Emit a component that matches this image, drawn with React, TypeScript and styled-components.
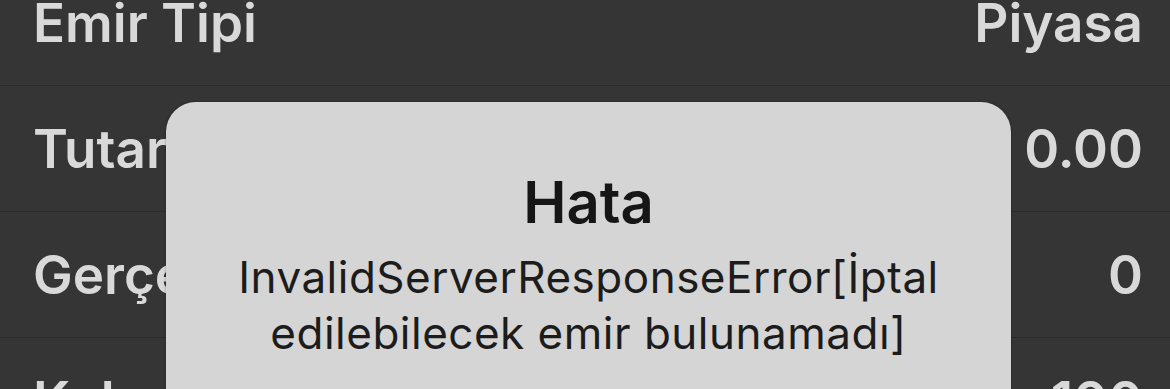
import React from "react";
import styled, { createGlobalStyle } from "styled-components";

const GlobalStyle = createGlobalStyle`
  html, body {
    margin: 0;
    padding: 0;
    width: 1170px;
    height: 389px;
    overflow: hidden;
    background: #353535;
    font-family: Inter, "Noto Sans", "Liberation Sans", sans-serif;
  }
`;

const Screen = styled.div`
  position: relative;
  width: 1170px;
  height: 389px;
  overflow: hidden;
  background: #353535;
`;

const List = styled.div`
  display: flex;
  flex-direction: column;
  margin-top: -40px;
`;

const Row = styled.div`
  display: flex;
  align-items: center;
  justify-content: space-between;
  height: 125px;
  padding: 0 27px 0 33px;
  border-bottom: 1px solid #2b2b2b;
`;

const Label = styled.span`
  font-size: 53px;
  line-height: 62px;
  font-weight: 600;
  color: #d9d9d9;
`;

const Value = styled(Label)`
  font-weight: 600;
`;

const Dialog = styled.div`
  position: absolute;
  left: 166px;
  top: 102px;
  width: 845px;
  height: 340px;
  box-sizing: border-box;
  padding-top: 65px;
  background: #d5d5d5;
  border-radius: 30px;
  box-shadow: 0 0 3px rgba(0, 0, 0, 0.35);
  display: flex;
  flex-direction: column;
  align-items: center;
  text-align: center;
`;

const Title = styled.h2`
  margin: 0;
  font-size: 58px;
  line-height: 70px;
  font-weight: 600;
  color: #161616;
`;

const Message = styled.p`
  margin: 12px 0 0;
  font-size: 44px;
  line-height: 56px;
  font-weight: 400;
  letter-spacing: 0.5px;
  color: #1c1c1c;
  width: 780px;
`;

const rows = [
  { label: "Emir Tipi", value: "Piyasa" },
  { label: "Tutar", value: "0.00" },
  { label: "Gerçekleşen", value: "0" },
  { label: "Kalan", value: "100" },
];

export default function App() {
  return (
    <Screen>
      <GlobalStyle />
      <List>
        {rows.map((r) => (
          <Row key={r.label}>
            <Label>{r.label}</Label>
            <Value>{r.value}</Value>
          </Row>
        ))}
      </List>
      <Dialog role="alertdialog">
        <Title>Hata</Title>
        <Message>
          InvalidServerResponseError[İptal
          <br />
          edilebilecek emir bulunamadı]
        </Message>
      </Dialog>
    </Screen>
  );
}
